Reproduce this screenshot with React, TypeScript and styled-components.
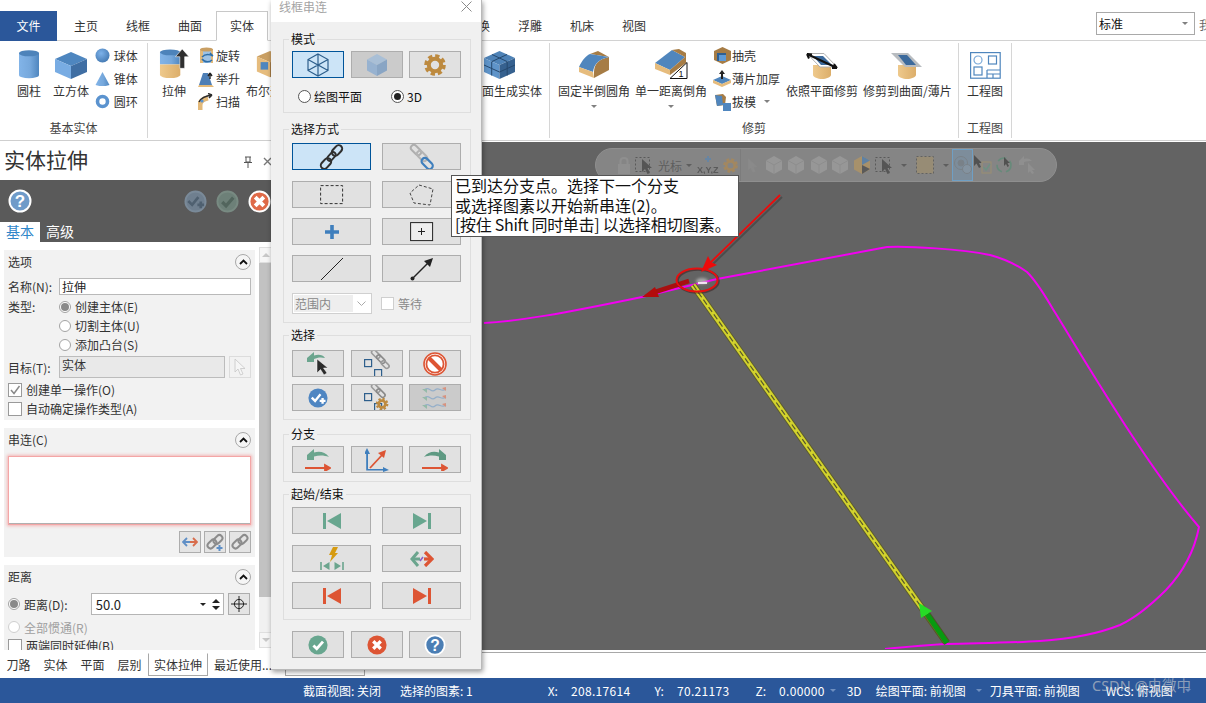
import React from 'react';
import styled, { createGlobalStyle } from 'styled-components';

const Global = createGlobalStyle`
  html, body { margin: 0; padding: 0; width: 1206px; height: 703px; overflow: hidden; background: #fff; }
  body { font-family: "Noto Sans CJK SC", "Noto Sans", sans-serif; font-size: 12px; color: #2b2b2b; }
  * { box-sizing: border-box; }
`;

const Root = styled.div`position: relative; width: 1206px; height: 703px; overflow: hidden; display: flex; flex-direction: column; background: #fff;`;

/* ---------- tab strip ---------- */
const TabStrip = styled.div`height: 41px; flex: none; display: flex; align-items: flex-end; border-bottom: 1px solid #d2d2d2; white-space: nowrap;`;
const FileTab = styled.div`width: 57px; height: 30px; margin-right: 3px; margin-bottom: -1px; background: #2b579a; color: #fff; display: flex; align-items: center; justify-content: center; line-height: 14px;`;
const Tab = styled.div<{ $active?: boolean; $w?: number }>`
  width: ${p => p.$w ?? 52}px; height: ${p => (p.$active ? 30 : 29)}px; margin-bottom: ${p => (p.$active ? -1 : 0)}px;
  display: flex; align-items: center; justify-content: center; line-height: 14px; color: #333;
  background: #fff; border: 1px solid ${p => (p.$active ? '#c8c8c8' : 'transparent')}; border-bottom-color: ${p => (p.$active ? '#fff' : 'transparent')};
`;
const StyleCombo = styled.div`margin-left: auto; margin-bottom: 5px; width: 99px; height: 23px; border: 1px solid #a9a9a9; display: flex; align-items: center; justify-content: space-between; padding: 0 6px 0 2px; color: #111;`;
const ClippedHint = styled.span`margin: 0 -5px 7px 4px; color: #666;`;
const Caret = styled.i<{ $c?: string; $ml?: number }>`
  display: inline-block; flex: none; width: 0; height: 0; margin-left: ${p => p.$ml ?? 0}px;
  border-left: 3px solid transparent; border-right: 3px solid transparent; border-top: 3px solid ${p => p.$c ?? '#808080'};
`;

/* ---------- ribbon ---------- */
const Ribbon = styled.div`height: 100px; flex: none; display: flex; padding-top: 2px; border-bottom: 1px solid #cfcfcf;`;
const RGroup = styled.div<{ $w: number }>`width: ${p => p.$w}px; height: 95px; flex: none; display: flex; flex-direction: column; border-right: 1px solid #d6d6d6;`;
const RGroupBody = styled.div<{ $pl: number; $gap?: number }>`height: 76px; display: flex; align-items: flex-start; padding-left: ${p => p.$pl}px; gap: ${p => p.$gap ?? 5}px; white-space: nowrap;`;
const RGroupLabel = styled.div`height: 19px; line-height: 17px; text-align: center; color: #444;`;
const Big = styled.div<{ $ml?: number; $auto?: boolean }>`
  display: flex; flex-direction: column; align-items: center; flex: none;
  margin-left: ${p => (p.$auto ? 'auto' : `${p.$ml ?? 0}px`)}; ${p => p.$auto && 'margin-right: 7px;'}
`;
const BigIcon = styled.div`height: 41px; display: flex; align-items: flex-end; justify-content: center; padding-bottom: 5px;`;
const BigText = styled.div`height: 14px; line-height: 14px; color: #333;`;
const BigCaret = styled.div`height: 16px; display: flex; align-items: center; justify-content: center;`;
const SmallCol = styled.div<{ $ml?: number }>`display: flex; flex-direction: column; padding-top: 1px; margin-left: ${p => p.$ml ?? 0}px; flex: none;`;
const SmallItem = styled.div`height: 23px; display: flex; align-items: center; gap: 1px; color: #333; line-height: 14px;`;
const SmallIconBox = styled.span<{ $w: number }>`width: ${p => p.$w}px; display: flex; justify-content: center; flex: none;`;

/* ---------- main ---------- */
const Main = styled.div`height: 512px; flex: none; display: flex;`;
const Left = styled.div`width: 271px; flex: none; display: flex; flex-direction: column; overflow: hidden; background: #fff;`;
const PanelHead = styled.div`height: 39px; flex: none; display: flex; align-items: center; padding: 0 0 4px 4px; font-size: 21px; color: #333; white-space: nowrap;`;
const PanelHeadTools = styled.div`margin-left: auto; display: flex; align-items: center; gap: 10px; margin-right: -1px; padding-top: 6px;`;
const DarkBar = styled.div`height: 42px; flex: none; background: #5a5a5a; display: flex; align-items: center; padding-left: 8px;`;
const DarkBarRight = styled.div`margin-left: auto; display: flex; gap: 9px;`;
const PanelTabs = styled.div`height: 20px; flex: none; background: #5a5a5a; display: flex; align-items: stretch; font-size: 14px; line-height: 18px;`;
const PanelTab = styled.div<{ $on?: boolean }>`
  ${p => p.$on && 'width: 40px;'} text-align: center;
  background: ${p => (p.$on ? '#fff' : 'transparent')}; color: ${p => (p.$on ? '#2f86c9' : '#fff')}; margin-left: ${p => (p.$on ? 0 : 6)}px;
`;
const PanelBody = styled.div`height: 408px; flex: none; display: flex; align-items: flex-start; padding: 8px 0 0 4px; overflow: hidden;`;
const Cards = styled.div`width: 251px; flex: none; display: flex; flex-direction: column; gap: 8px;`;
const Card = styled.section<{ $h: number }>`height: ${p => p.$h}px; flex: none; background: #f2f2f2; padding: 0 4px; white-space: nowrap;`;
const CardHead = styled.div`height: 24px; display: flex; align-items: center; justify-content: space-between; color: #333; line-height: 14px; padding-bottom: 1px;`;
const Collapse = styled.span`width: 16px; height: 16px; border-radius: 50%; border: 1px solid #a8a8a8; background: #f5f5f5; display: flex; align-items: center; justify-content: center;`;
const FormRow = styled.div<{ $h: number; $mt?: number }>`height: ${p => p.$h}px; margin-top: ${p => p.$mt ?? 0}px; display: flex; align-items: center; color: #333;`;
const FieldLabel = styled.span<{ $top?: boolean }>`width: 51px; flex: none; ${p => p.$top && 'align-self: flex-start; line-height: 19px;'}`;
const TextInput = styled.div`width: 192px; height: 17px; background: #fff; border: 1px solid #b9b9b9; padding-left: 2px; line-height: 15px; color: #222;`;
const Dot = styled.span<{ $on?: boolean; $dis?: boolean; $size?: number; $dark?: boolean; $ml?: number }>`
  width: ${p => p.$size ?? 12}px; height: ${p => p.$size ?? 12}px; border-radius: 50%; background: #fff; flex: none; margin-left: ${p => p.$ml ?? 0}px;
  border: 1px solid ${p => (p.$dark ? '#555' : p.$dis ? '#cfcfcf' : '#a3a3a3')}; display: flex; align-items: center; justify-content: center;
  &::after { content: ''; display: ${p => (p.$on ? 'block' : 'none')}; width: ${p => (p.$dark ? 7 : 8)}px; height: ${p => (p.$dark ? 7 : 8)}px; border-radius: 50%; background: ${p => (p.$dark ? '#222' : '#8a8a8a')}; }
`;
const RadioStack = styled.div`display: flex; flex-direction: column;`;
const RadioRow = styled.label`height: 19px; display: flex; align-items: center; gap: 4px; color: #333;`;
const DimText = styled.span`color: #a0a0a0; margin-left: 4px;`;
const DotLabel = styled.span`margin-left: 4px;`;
const TargetBox = styled.div`width: 166px; height: 22px; background: #e9e9e9; border: 1px solid #bcbcbc; padding: 0 2px; line-height: 15px; color: #333;`;
const SquareBtn = styled.div<{ $faint?: boolean; $ml?: number }>`
  width: 22px; height: 22px; flex: none; margin-left: ${p => p.$ml ?? 0}px; background: ${p => (p.$faint ? '#f2f2f2' : '#e4e4e4')}; border: 1px solid ${p => (p.$faint ? '#dcdcdc' : '#adadad')};
  display: flex; align-items: center; justify-content: center;
`;
const CheckRow = styled.label<{ $mt?: number }>`height: 19px; margin-top: ${p => p.$mt ?? 0}px; display: flex; align-items: center; gap: 4px; color: #333;`;
const CheckBox = styled.span`width: 14px; height: 14px; flex: none; background: #fff; border: 1px solid #9a9a9a; display: flex; align-items: center; justify-content: center;`;
const ChainList = styled.div`height: 67px; margin: 5px 1px 0; background: #fff; border-bottom: 1px solid #b0b0b0; box-shadow: 0 0 0 1px #f4a6a6, 0 0 3px 2px #f3b5b5;`;
const BtnRow = styled.div`margin-top: 7px; display: flex; justify-content: flex-end; gap: 3px;`;
const Spin = styled.div`width: 133px; height: 22px; margin-left: 23px; margin-right: 4px; flex: none; background: #fff; border: 1px solid #b5b5b5; display: flex; align-items: center; padding: 0 3px 0 4px; font-size: 13px; color: #222;`;
const SpinTools = styled.div`margin-left: auto; display: flex; align-items: center; gap: 6px;`;
const Updown = styled.div`display: flex; flex-direction: column; gap: 3px;`;
const TriUp = styled.i`display: block; width: 0; height: 0; border-left: 4px solid transparent; border-right: 4px solid transparent; border-bottom: 4px solid #222;`;
const TriDown = styled.i`display: block; width: 0; height: 0; border-left: 4px solid transparent; border-right: 4px solid transparent; border-top: 4px solid #222;`;
const Scrollbar = styled.div`width: 13px; height: 401px; margin: -3px 0 0 4px; flex: none; display: flex; flex-direction: column; background: #f1f1f1;`;
const ScrollBtn = styled.div`height: 16px; flex: none; border: 1px solid #dfdfdf; background: #f6f6f6; display: flex; align-items: center; justify-content: center;`;
const ScrollThumb = styled.div`height: 334px; flex: none; background: #c2c2c2;`;
const ScrollGap = styled.div`flex: 1;`;
const TriGrayUp = styled.i`display: block; width: 0; height: 0; border-left: 4px solid transparent; border-right: 4px solid transparent; border-bottom: 4px solid #c8c8c8;`;
const TriGrayDown = styled.i`display: block; width: 0; height: 0; border-left: 4px solid transparent; border-right: 4px solid transparent; border-top: 4px solid #c8c8c8;`;

const ViewWrap = styled.div`flex: 1; display: flex; flex-direction: column; padding-top: 1px; border-bottom: 1px solid #a8a8a8; padding-bottom: 2px;`;
const Canvas = styled.div`flex: 1; position: relative; background: #636363; overflow: hidden;`;
const Drawing = styled.svg`position: absolute; left: 0; top: 0;`;
const Pill = styled.div`
  position: absolute; left: 324px; top: 6px; width: 462px; height: 34px; border-radius: 17px;
  background: #858585; border: 1px solid #8f8f8f; display: flex; align-items: center; padding-left: 20px; color: #5e5e5e;
  svg { opacity: .52; }
`;
const PillSlot = styled.span<{ $w: number; $hi?: boolean }>`
  width: ${p => p.$w}px; flex: none; align-self: stretch; display: flex; align-items: center; justify-content: center;
  ${p => p.$hi && 'background: #7d8d9b; outline: 1px solid #6f9fc4; outline-offset: -1px;'}
`;
const PillSep = styled.span`width: 1px; align-self: stretch; background: #7c7c7c; flex: none;`;

/* ---------- bottom ---------- */
const BottomTabs = styled.div`height: 25px; flex: none; display: flex; align-items: flex-start; white-space: nowrap;`;
const BTab = styled.div<{ $w: number; $on?: boolean; $ml?: number }>`
  width: ${p => p.$w}px; height: 23px; flex: none; margin-left: ${p => p.$ml ?? 0}px; display: flex; align-items: center; justify-content: center; color: #333;
  border: 1px solid ${p => (p.$on ? '#a8a8a8' : 'transparent')}; border-top-color: transparent;
`;
const Status = styled.div`height: 25px; flex: none; background: #2b579a; color: #fff; display: flex; align-items: center; white-space: nowrap; line-height: 14px;`;
const SItem = styled.span<{ $ml: number; $num?: boolean }>`margin-left: ${p => p.$ml}px; flex: none; display: inline-flex; align-items: center; ${p => p.$num && 'letter-spacing: .33px;'}`;
const Watermark = styled.div`position: absolute; left: 1092px; top: 676px; font-size: 14.5px; line-height: 18px; color: rgba(205,205,205,.62); white-space: nowrap; font-family: "Noto Sans", "Noto Sans CJK SC", sans-serif;`;

/* ---------- dialog ---------- */
const Dialog = styled.div`
  position: absolute; left: 271px; top: 0; width: 211px; height: 670px; background: #f0f0f0; border-right: 1px solid #b9b9b9; border-bottom: 1px solid #b9b9b9;
  box-shadow: 1px 2px 5px rgba(0,0,0,.4); display: flex; flex-direction: column;
`;
const DialogTitle = styled.div`height: 22px; flex: none; background: #fff; display: flex; align-items: flex-start; justify-content: space-between; padding: 0 9px 0 8px; color: #a4a4a4; line-height: 14px;`;
const Group = styled.fieldset<{ $mt: number; $h: number }>`
  margin: ${p => p.$mt}px 0 0 12px; width: 188px; height: ${p => p.$h}px; flex: none; min-width: 0;
  border: 1px solid #dedede; padding: 5px 9px 0 8px; display: flex; flex-direction: column;
`;
const GroupName = styled.legend`margin-left: -3px; padding: 0 2px; line-height: 14px; height: 14px; color: #111; font-size: 12px;`;
const BtnGrid = styled.div<{ $cols: number; $gap?: number; $mt?: number }>`
  display: grid; grid-template-columns: repeat(${p => p.$cols}, ${p => (p.$cols === 3 ? 52 : 79)}px);
  justify-content: space-between; row-gap: ${p => p.$gap ?? 10}px; margin-top: ${p => p.$mt ?? 0}px;
`;
const DBtn = styled.div<{ $state?: 'on' | 'off' }>`
  height: 27px; display: flex; align-items: center; justify-content: center; overflow: hidden;
  background: ${p => (p.$state === 'on' ? '#cce4f7' : p.$state === 'off' ? '#cbcbcb' : '#e1e1e1')};
  border: 1px solid ${p => (p.$state === 'on' ? '#005499' : '#adadad')};
`;
const ModeRow = styled.div`height: 18px; margin-top: 9px; padding-left: 6px; display: flex; align-items: center; color: #111; gap: 3px;`;
const Select = styled.div`width: 80px; height: 21px; background: #fff; border: 1px solid #d0d0d0; padding: 1px; display: flex; align-items: stretch; color: #888;`;
const SelectValue = styled.span`width: 59px; background: #eeeeee; padding-left: 1px; line-height: 17px;`;
const SelectArrow = styled.span`flex: 1; display: flex; align-items: center; justify-content: center;`;
const WaitRow = styled.div`display: flex; align-items: center; gap: 4px; margin-left: 9px; color: #8a8a8a;`;
const SelectRow = styled.div`display: flex; align-items: center; margin-top: 11px;`;
const WaitBox = styled.span`width: 13px; height: 13px; background: #fff; border: 1px solid #cfcfcf;`;
const Footer = styled.div`margin: 11px 0 0 21px; width: 169px;`;
const Tip = styled.div`
  position: absolute; left: 451px; top: 175px; width: 288px; height: 62px; background: #fff; border: 1px solid #555;
  padding: 0 0 0 3px; font-size: 16px; line-height: 19.5px; color: #111; white-space: pre;
`;
const TipLatin = styled.span`letter-spacing: -.3px;`;

/* ---------- drawings ---------- */
const Defs = () => (
  <svg width="0" height="0" style={{ position: 'absolute' }}>
    <defs>
      <linearGradient id="cyl" x1="0" x2="1" y1="0" y2="0"><stop offset="0" stopColor="#82b4e8" /><stop offset=".55" stopColor="#76a8dc" /><stop offset="1" stopColor="#4f86bf" /></linearGradient>
      <linearGradient id="tan" x1="0" x2="1" y1="0" y2="0"><stop offset="0" stopColor="#eec98c" /><stop offset="1" stopColor="#dcae6a" /></linearGradient>
      <radialGradient id="sph" cx=".4" cy=".35" r=".75"><stop offset="0" stopColor="#7db2ea" /><stop offset="1" stopColor="#3f74ad" /></radialGradient>
    </defs>
  </svg>
);
const Cylinder = () => (
  <svg width="24" height="30" viewBox="0 0 24 32" preserveAspectRatio="none"><rect x="2" y="4" width="20" height="24" fill="url(#cyl)" /><ellipse cx="12" cy="28" rx="10" ry="3.2" fill="url(#cyl)" /><ellipse cx="12" cy="4.5" rx="10" ry="3.3" fill="#4d83ba" /></svg>
);
const Cube = () => (
  <svg width="32" height="27" viewBox="0 0 32 27"><path d="M16 0 32 7 16 14 0 7Z" fill="#4e86bf" /><path d="M0 7 16 14V27L0 20Z" fill="#78ace3" /><path d="M32 7 16 14V27L32 20Z" fill="#3f6ea3" /></svg>
);
const Sphere = () => <svg width="15" height="15" viewBox="0 0 15 15"><circle cx="7.5" cy="7.5" r="7" fill="url(#sph)" /></svg>;
const Cone = () => <svg width="15" height="15" viewBox="0 0 15 15"><path d="M7.5 1 14.5 14Q7.5 16.5 .5 14Z" fill="url(#cyl)" /></svg>;
const Torus = () => <svg width="15" height="15" viewBox="0 0 15 15"><circle cx="7.5" cy="7.5" r="5" fill="none" stroke="#5b93cf" strokeWidth="3.6" /></svg>;
const Extrude = () => (
  <svg width="30" height="31" viewBox="0 0 31 32">
    <rect x="1" y="4" width="21" height="13" fill="url(#cyl)" /><rect x="1" y="17" width="21" height="11" fill="url(#tan)" /><ellipse cx="11.5" cy="28" rx="10.5" ry="3" fill="url(#tan)" /><ellipse cx="11.5" cy="4.5" rx="10.5" ry="3" fill="#4d83ba" />
    <path d="M24 1 31 9H26.5V21H21.5V9H17Z" fill="#2f2f2f" stroke="#fff" strokeWidth=".6" />
  </svg>
);
const Revolve = () => (
  <svg width="16" height="18" viewBox="0 0 16 18"><rect x="1" y="2" width="13" height="14" fill="#e3b979" /><rect x="4" y="2" width="8" height="14" fill="#9ec2e4" /><ellipse cx="7.5" cy="2.5" rx="6.5" ry="2" fill="#c99f63" /><path d="M3 10C6 7 10 7 14 9M14 9 11 6M3 12C6 16 11 15 13 13" fill="none" stroke="#2f6fa8" strokeWidth="1.6" /></svg>
);
const Loft = () => (
  <svg width="17" height="18" viewBox="0 0 17 18"><path d="M5 3H10L14 15H1Z" fill="#4e7fb6" /><path d="M1 15H14L16 17H0Z" fill="#e3b979" /><path d="M12 9V3M12 3 10 6M12 3 14 6" stroke="#222" strokeWidth="1.4" fill="none" /></svg>
);
const Sweep = () => (
  <svg width="17" height="18" viewBox="0 0 17 18"><path d="M2 17V12C2 8 5 6 10 5" fill="none" stroke="#e3b979" strokeWidth="5" /><path d="M1 9C3 5 7 3 14 2M14 2 10 .5M14 2 11 5" fill="none" stroke="#2c2c2c" strokeWidth="1.5" /><circle cx="4" cy="8" r="1.6" fill="#5b93cf" /></svg>
);
const BooleanIco = () => (
  <svg width="32" height="30" viewBox="0 0 32 32"><path d="M16 2 30 8 16 14 2 8Z" fill="#c99f63" /><path d="M2 8 16 14V30L2 24Z" fill="#e6bc7d" /><path d="M30 8 16 14V30L30 24Z" fill="#a67c45" /><rect x="6" y="14" width="8" height="8" fill="#4e86bf" /></svg>
);
const GridCube = () => (
  <svg width="31" height="28" viewBox="0 0 31 28">
    <path d="M15.5 0 31 7 15.5 14 0 7Z" fill="#4e82b6" /><path d="M0 7 15.5 14V28L0 21Z" fill="#5f94c9" /><path d="M31 7 15.5 14V28L31 21Z" fill="#36618f" />
    <path d="M8 3.5 23 10.5M23 3.5 8 10.5M7.7 10.5V24.5M23.2 10.5V24.5M0 14 15.5 21 31 14" stroke="#26496e" fill="none" strokeWidth="1" />
  </svg>
);
const Fillet = () => (
  <svg width="31" height="28" viewBox="0 0 31 28">
    <path d="M11 3 19 0 30 6Z" fill="#a67c45" /><path d="M30 6V19L15 27V21C15 13 20 8 30 6Z" fill="#a67c45" />
    <path d="M0 16C3 9 8 4 11 3L30 6C20 8 15 13 14 21Z" fill="#5086bd" /><path d="M0 16 14 21 15 27 0 21Z" fill="#e6bc7d" />
  </svg>
);
const Chamfer = () => (
  <svg width="33" height="30" viewBox="0 0 33 30">
    <path d="M0 14 17 1 30 8 15 21Z" fill="#5086bd" /><path d="M17 1 24 0 31 4 31 14 15 26 15 21 30 8Z" fill="#a67c45" /><path d="M0 14 15 21V26L0 20Z" fill="#e6bc7d" />
    <path d="M15 29.5H32V13.5Z" fill="#fff" stroke="#111" strokeWidth="1" /><text x="23.5" y="28" fontSize="9" fontFamily="Liberation Sans" fill="#111">1</text>
  </svg>
);
const Shell = () => (
  <svg width="17" height="17" viewBox="0 0 17 17"><path d="M8.5 0 17 4V13L8.5 17 0 13V4Z" fill="#a67c45" /><path d="M3 6 12 6V14L3 14Z" fill="#2f5f92" /><path d="M5 8H12V14H5Z" fill="#5d9ad8" /></svg>
);
const Thicken = () => (
  <svg width="18" height="17" viewBox="0 0 18 17"><path d="M9 6 18 10 9 14 0 10Z" fill="#5086bd" /><path d="M0 10 9 14 18 10V13L9 17 0 13Z" fill="#e6bc7d" /><path d="M9 0 12 4H10V9H8V4H6Z" fill="#222" /></svg>
);
const Draft = () => (
  <svg width="17" height="18" viewBox="0 0 17 18"><path d="M1 2 9 1 12 4 11 12 3 13Z" fill="#a67c45" /><path d="M1 2 8 3 9 12 3 13Z" fill="#5086bd" /><rect x="9" y="10" width="8" height="8" fill="#4f86bf" /></svg>
);
const TrimPlane = () => (
  <svg width="32" height="26" viewBox="0 0 32 26"><path d="M7 12V22C7 24 12 26 16 26S25 24 25 22V12Z" fill="url(#tan)" /><path d="M1 .5H18L31 14H14Z" fill="#fff" stroke="#b0b0b0" /><path d="M7 3H17L26 12H15Z" fill="#3c6a9c" /><path d="M1 1 31 15M1 1 6 1.5M1 1 3 5.5M31 15 26 15M31 15 28 11" fill="none" stroke="#111" strokeWidth="2" /></svg>
);
const TrimSurface = () => (
  <svg width="32" height="26" viewBox="0 0 32 26"><path d="M7 12V22C7 24 12 26 16 26S25 24 25 22V12Z" fill="url(#tan)" /><path d="M0 0H17L31 14H14Z" fill="#b8bcc0" /><path d="M7 2H16L25 12H15Z" fill="#3c6a9c" /></svg>
);
const Drawing2D = () => (
  <svg width="31" height="27" viewBox="0 0 31 27" fill="none" stroke="#4f86bd" strokeWidth="1.2">
    <rect x=".6" y=".6" width="29.6" height="25.6" /><circle cx="8" cy="8" r="4" stroke="#7aa9d8" /><rect x="18.5" y="4" width="8" height="8" /><rect x="4" y="15" width="8" height="8" /><path d="M17 18H30M17 22H30M17 18V26M23 22V26" />
  </svg>
);
const Pin = () => <svg width="10" height="12" viewBox="0 0 10 12"><path d="M2 1H8M3 1V6H7V1M1 6.5H9M5 7V12" stroke="#555" fill="none" /></svg>;
const MiniX = () => <svg width="9" height="9" viewBox="0 0 9 9"><path d="M1 1 8 8M8 1 1 8" stroke="#777" strokeWidth="1.4" /></svg>;
const Chevron = () => <svg width="9" height="6" viewBox="0 0 9 6"><path d="M1 5 4.5 1.5 8 5" fill="none" stroke="#111" strokeWidth="1.8" /></svg>;

type RoundKind = 'help' | 'check' | 'x' | 'checkplus';
const Round = ({ size, bg, ring, kind, mark = '#fff' }: { size: number; bg: string; ring?: string; kind: RoundKind; mark?: string }) => (
  <svg width={size} height={size} viewBox="0 0 24 24">
    <circle cx="12" cy="12" r={ring ? 10.5 : 11.5} fill={bg} stroke={ring ?? 'none'} strokeWidth={ring ? 2 : 0} />
    {kind === 'help' && <text x="12" y="18" textAnchor="middle" fontSize="17" fontWeight="700" fontFamily="Liberation Sans" fill={mark}>?</text>}
    {kind === 'check' && <path d="M6.5 12.5 10.5 16.5 18 8" fill="none" stroke={mark} strokeWidth="3.4" />}
    {kind === 'x' && <path d="M7.5 7.5 16.5 16.5M16.5 7.5 7.5 16.5" fill="none" stroke={mark} strokeWidth="4" />}
    {kind === 'checkplus' && <path d="M4.5 11.5 8.5 15.5 15 7.5M14 15.5H21M17.5 12V19" fill="none" stroke={mark} strokeWidth="2.8" />}
  </svg>
);
const Cursor = ({ c = '#222', s = '#fff', w = 12, h = 18 }: { c?: string; s?: string; w?: number; h?: number }) => (
  <svg width={w} height={h} viewBox="0 0 12 18"><path d="M1 1V14L4 11 6.5 17 9 16 6.5 10.5H11Z" fill={c} stroke={s} strokeWidth=".8" /></svg>
);
const BlackChain = () => (
  <svg width="25" height="26" viewBox="0 0 25 26" fill="none" stroke="#2f2f2f">
    <rect x="1" y="16" width="12" height="7" rx="3.5" strokeWidth="2" transform="rotate(-48 7 19.5)" />
    <rect x="7.5" y="10" width="10" height="5" rx="2.5" strokeWidth="1.8" transform="rotate(-48 12.5 12.5)" />
    <rect x="12" y="3" width="12" height="7" rx="3.5" strokeWidth="2" transform="rotate(-48 18 6.5)" />
  </svg>
);
const GrayBlueChain = () => (
  <svg width="26" height="26" viewBox="0 0 26 26" fill="none">
    <rect x="1" y="3" width="12" height="6" rx="3" stroke="#aeaeae" strokeWidth="2" transform="rotate(45 7 6)" /><rect x="7" y="9" width="12" height="6" rx="3" stroke="#b4b4b4" strokeWidth="2" transform="rotate(45 13 12)" /><rect x="12" y="16" width="13" height="6.5" rx="3.2" stroke="#3f7fbd" strokeWidth="2.2" transform="rotate(45 18 19)" />
  </svg>
);
const WireCube = () => (
  <svg width="22" height="24" viewBox="0 0 22 24" fill="none" stroke="#2e5f8c" strokeWidth="1.2"><path d="M11 1 21 6.5V17.5L11 23 1 17.5V6.5ZM1 6.5 11 12 21 6.5M11 1V23M1 17.5 11 12 21 17.5" /></svg>
);
const SolidCube = () => (
  <svg width="22" height="24" viewBox="0 0 22 24"><path d="M11 1 21 6.5 11 12 1 6.5Z" fill="#a9bfd6" /><path d="M1 6.5 11 12V23L1 17.5Z" fill="#97b2d0" /><path d="M21 6.5 11 12V23L21 17.5Z" fill="#89a5c4" /></svg>
);
const Gear = ({ size = 22, c = '#bd8a3f' }: { size?: number; c?: string }) => (
  <svg width={size} height={size} viewBox="0 0 22 22" fill="none"><circle cx="11" cy="11" r="6.2" stroke={c} strokeWidth="4" /><circle cx="11" cy="11" r="9" stroke={c} strokeWidth="3.6" strokeDasharray="4.2 2.85" /></svg>
);
const DashedRect = () => <svg width="24" height="20" viewBox="0 0 24 20"><rect x=".6" y=".6" width="22" height="18" fill="none" stroke="#333" strokeDasharray="3 2" /></svg>;
const DashedPoly = () => <svg width="26" height="22" viewBox="0 0 26 22"><path d="M10 1 24 5 21 21 5 19 1 9Z" fill="none" stroke="#444" strokeDasharray="3 2" /></svg>;
const Plus = () => <svg width="14" height="14" viewBox="0 0 14 14"><path d="M7 0V14M0 7H14" stroke="#3f7fbd" strokeWidth="3.6" /></svg>;
const BoxPlus = () => <svg width="24" height="20" viewBox="0 0 24 20"><rect x=".6" y=".6" width="22" height="18" fill="#eee" stroke="#222" /><path d="M11.5 6V13M8 9.5H15" stroke="#222" /></svg>;
const LineIco = () => <svg width="24" height="24" viewBox="0 0 24 24"><path d="M1 23 23 1" stroke="#222" /></svg>;
const ArrowIco = () => <svg width="24" height="24" viewBox="0 0 24 24"><circle cx="2.5" cy="21.5" r="2" fill="#222" /><path d="M2.5 21.5 19 5" stroke="#222" strokeWidth="1.4" /><path d="M23 1 20 10 14 4Z" fill="#222" /></svg>;
const BackCursor = () => (
  <svg width="22" height="24" viewBox="0 0 22 24"><path d="M0 6 7 0V3.5C12 2 16 3 18 6 14 5 10 5.5 7 7V10H0Z" fill="#6ba58e" /><path d="M11 7V21L14.5 17.5 18 23 21 21 17.5 16H22Z" fill="#2b2b2b" stroke="#fff" strokeWidth=".5" transform="translate(-1 0)" /></svg>
);
const SquaresChain = ({ gear }: { gear?: boolean }) => (
  <svg width="26" height="26" viewBox="0 0 26 26" fill="none">
    <rect x=".6" y="8.6" width="7" height="7" stroke="#2e5f8c" strokeWidth="1.2" />
    <rect x="10.6" y="18.6" width="7" height="7" stroke="#2e5f8c" strokeWidth="1.2" />
    <rect x="7" y="1" width="10" height="4.5" rx="2.2" stroke="#9a9a9a" strokeWidth="1.6" transform="rotate(45 12 3)" />
    <rect x="12" y="6" width="10" height="4.5" rx="2.2" stroke="#8a8a8a" strokeWidth="1.6" transform="rotate(45 17 8)" />
    {!gear && <rect x="17" y="11" width="9" height="4.5" rx="2.2" stroke="#9a9a9a" strokeWidth="1.6" transform="rotate(45 21 13)" />}
    {gear && <g transform="translate(12 13) scale(.55)"><circle cx="11" cy="11" r="6.2" stroke="#bd8a3f" strokeWidth="5" /><circle cx="11" cy="11" r="9.5" stroke="#bd8a3f" strokeWidth="4" strokeDasharray="4 3.4" /></g>}
  </svg>
);
const NoSign = () => (
  <svg width="24" height="24" viewBox="0 0 24 24"><circle cx="12" cy="12" r="11" fill="#fff" stroke="#dd5534" strokeWidth="1.6" /><circle cx="12" cy="12" r="8.6" fill="none" stroke="#dd5534" strokeWidth="1.8" /><path d="M6 6 18 18" stroke="#dd5534" strokeWidth="4" /></svg>
);
const Waves = () => (
  <svg width="26" height="24" viewBox="0 0 26 24" fill="none" opacity=".7">
    {[4, 12, 20].map(y => (
      <g key={y}><path d={`M2 ${y}C7 ${y - 5} 9 ${y + 4} 13 ${y} 17 ${y - 4} 19 ${y + 3} 24 ${y - 1}`} stroke="#7da3c8" strokeWidth="1.2" /><path d={`M0 ${y - 1}H5V${y + 3}Z`} fill="#7fb39c" /><path d={`M24 ${y - 3}V${y + 1}L20 ${y - 2}Z`} fill="#dd7a5e" /></g>
    ))}
  </svg>
);
const RedLine = ({ y }: { y: number }) => <path d={`M0 ${y}H20M20 ${y - 3}V${y + 3}L25 ${y}Z`} stroke="#dd5534" strokeWidth="1.8" fill="#dd5534" />;
const BackBranch = () => <svg width="26" height="22" viewBox="0 0 26 22"><path d="M2 6 9 0V3.5C15 2 20 3 24 8 19 6 14 6 9 7.5V11H2Z" fill="#6ba58e" /><RedLine y={19} /></svg>;
const FwdBranch = () => <svg width="26" height="22" viewBox="0 0 26 22"><path d="M24 6 17 0V3.5C11 2 6 3 2 8 7 6 12 6 17 7.5V11H24Z" fill="#5f9a83" /><RedLine y={19} /></svg>;
const Axes = () => (
  <svg width="24" height="24" viewBox="0 0 24 24"><path d="M2 0 5 6H3V21H18V19L24 22 18 24V22.5H1.2V6H-1Z" fill="#3f7fbd" /><path d="M5 20 18 6" stroke="#dd5534" strokeWidth="1.8" /><path d="M21 2 19 10 13 5Z" fill="#dd5534" /></svg>
);
const SkipStart = ({ c }: { c: string }) => <svg width="18" height="16" viewBox="0 0 18 16"><rect x="0" width="3" height="16" fill={c} /><path d="M18 0V16L4 8Z" fill={c} /></svg>;
const SkipEnd = ({ c }: { c: string }) => <svg width="18" height="16" viewBox="0 0 18 16"><rect x="15" width="3" height="16" fill={c} /><path d="M0 0V16L14 8Z" fill={c} /></svg>;
const Bolt = () => (
  <svg width="24" height="24" viewBox="0 0 24 24"><path d="M13 0H18L15 6H18L10 15 12 8H9Z" fill="#d69b10" /><path d="M1 15V23M23 15V23" stroke="#6ba58e" strokeWidth="1.6" /><path d="M9.5 15V23L3 19Z M14.5 15V23L21 19Z" fill="#6ba58e" /></svg>
);
const Swap = () => (
  <svg width="24" height="16" viewBox="0 0 24 16"><path d="M8 1 2 8 8 15" fill="none" stroke="#6ba58e" strokeWidth="3" /><path d="M2 8H10" stroke="#6ba58e" strokeWidth="3" /><path d="M15 1 22 8 15 15" fill="none" stroke="#dd5534" strokeWidth="3.2" /><path d="M14 8H22" stroke="#dd5534" strokeWidth="3.2" /><path d="M10 10 13 6" stroke="#8a5cc7" strokeWidth="1.5" /></svg>
);
const SwapSmall = () => <svg width="16" height="10" viewBox="0 0 16 10"><path d="M8 5H2M5 1 1 5 5 9" fill="none" stroke="#5f8fc6" strokeWidth="1.8" /><path d="M8 5H14M11 1 15 5 11 9" fill="none" stroke="#d86d4c" strokeWidth="1.8" /></svg>;
const ChainGray = ({ plus }: { plus?: boolean }) => (
  <svg width="18" height="18" viewBox="0 0 18 18" fill="none">
    <rect x="1" y="8" width="10" height="6" rx="3" stroke="#8c8c8c" strokeWidth="2" transform="rotate(-45 6 11)" /><rect x="7" y="3.5" width="10" height="6" rx="3" stroke="#8c8c8c" strokeWidth="2" transform="rotate(-45 12 6.5)" />
    {plus && <path d="M13.5 12V18M10.5 15H16.5" stroke="#5f8fc6" strokeWidth="2" />}
  </svg>
);
const Target = () => <svg width="16" height="16" viewBox="0 0 16 16" fill="none" stroke="#222"><circle cx="8" cy="8" r="4.6" /><path d="M8 0V16M0 8H16" /></svg>;

const PillLock = () => <svg width="14" height="18" viewBox="0 0 14 18"><rect x="1" y="8" width="12" height="10" fill="#999" /><path d="M3.5 8V5C3.5 1 10.5 1 10.5 5V8" fill="none" stroke="#999" strokeWidth="2" /></svg>;
const PillCursorBox = () => <svg width="20" height="20" viewBox="0 0 20 20"><rect x=".5" y="2.5" width="14" height="14" fill="none" stroke="#333" strokeDasharray="2 2" /><path d="M7 4V17L10 14 12.5 19 15 18 12.5 13H17Z" fill="#2b2b2b" /></svg>;
const PillXYZ = () => <svg width="22" height="18" viewBox="0 0 22 18"><path d="M11 0V6M8 3H14" stroke="#4f86bd" strokeWidth="2" /><text x="0" y="17" fontSize="9" fontWeight="700" fontFamily="Liberation Sans" fill="#333">X,Y,Z</text></svg>;
const PillCube = ({ c = '#a9a9a9' }: { c?: string }) => <svg width="16" height="18" viewBox="0 0 16 18"><path d="M8 0 16 4.5V13.5L8 18 0 13.5V4.5Z" fill={c} /><path d="M0 4.5 8 9 16 4.5M8 9V18" stroke="#888" fill="none" strokeWidth=".6" /></svg>;
const PillTan = () => <svg width="16" height="18" viewBox="0 0 16 18"><path d="M8 0 16 4.5V13.5L8 18 0 13.5V4.5Z" fill="#c79c55" /><path d="M8 0 16 4.5 8 9Z" fill="#3f7fbd" /><path d="M8 9 16 13 8 18Z" fill="#333" /></svg>;
const PillTanBox = () => <svg width="18" height="18" viewBox="0 0 18 18"><rect x=".5" y=".5" width="17" height="17" fill="#a89468" stroke="#444" strokeDasharray="2 2" /></svg>;
const PillClock = () => <svg width="20" height="20" viewBox="0 0 20 20" fill="none" stroke="#777"><circle cx="8" cy="8" r="6.5" /><circle cx="8" cy="8" r="3" fill="#777" /><circle cx="14" cy="14" r="4.5" fill="#8b99a5" /></svg>;
const PillCheckDoc = () => <svg width="20" height="20" viewBox="0 0 20 20"><path d="M1 0V11L3.5 8.5 6 13 8 12 6 8H9Z" fill="#222" /><rect x="9" y="7" width="9" height="11" fill="none" stroke="#a89468" strokeWidth="1.2" /><path d="M10.5 12 13 15 17 9" fill="none" stroke="#5a9c80" strokeWidth="1.4" /></svg>;
const PillRefresh = () => <svg width="20" height="20" viewBox="0 0 20 20" fill="none"><circle cx="9" cy="10" r="7" stroke="#4d8f70" strokeWidth="1.6" strokeDasharray="9 4" /><path d="M9 2V11L11 9 12.5 12 14 11 12.5 8H15Z" fill="#222" /></svg>;
const PillUndo = () => <svg width="18" height="18" viewBox="0 0 18 18"><path d="M0 5 5 0V3C9 2 11 3 13 5 10 5 7 5 5 6V9H0Z" fill="#9a9a9a" /><path d="M9 7V17L11 15 13 18 15 17 13 14H16Z" fill="#9a9a9a" /></svg>;

const CanvasArt = () => (
  <Drawing width="935" height="507" viewBox="271 142 935 507">
    <defs>
      <filter id="soft" x="-50%" y="-50%" width="200%" height="200%"><feGaussianBlur stdDeviation="1.6" /></filter>
    </defs>
    <path d="M484 323C520 321 560 314 642 297L717 279 887 247C910 246 960 249 990 255 1005 259 1017 265 1027 272 1040 285 1050 305 1056 314 1090 370 1150 470 1199 527 1195 548 1185 570 1166 590 1150 606 1135 618 1120 625 1095 635 1070 639 1040 641 1010 643 980 643 947 644 925 645 905 647 885 649" fill="none" stroke="#f200f2" strokeWidth="2" />
    <path d="M693 285 946 642" stroke="#5a5a22" strokeWidth="7" opacity=".8" />
    <path d="M693 285 946 642" stroke="#d2d22c" strokeWidth="5" />
    <path d="M693 285 946 642" stroke="#58582a" strokeWidth="1.2" strokeDasharray="6 3" />
    <ellipse cx="702" cy="281" rx="6" ry="3" fill="#c8c8c8" opacity=".7" filter="url(#soft)" />
    <path d="M698 283H707" stroke="#fff" strokeWidth="1.6" />
    <path d="M689 281 655 292" stroke="#a81010" strokeWidth="4.5" />
    <path d="M642 297 655 287 659 297Z" fill="#b30c0c" />
    <ellipse cx="697" cy="280" rx="20.5" ry="11.5" fill="none" stroke="#3a1a1a" strokeWidth="2.6" opacity=".5" transform="translate(1 1)" />
    <ellipse cx="697" cy="280" rx="20.5" ry="11.5" fill="none" stroke="#e61010" strokeWidth="2" />
    <path d="M781 196 712 263" stroke="#3a3a3a" strokeWidth="2" opacity=".55" transform="translate(1 1)" />
    <path d="M780 195 711 262" stroke="#ee0a0a" strokeWidth="1.8" />
    <path d="M701 272 708 256 711 262 717 265Z" fill="#ee0a0a" />
    <path d="M947 643 927 614" stroke="#4b4b20" strokeWidth="7" opacity=".7" />
    <path d="M947 643 927 614" stroke="#089a10" strokeWidth="5" />
    <path d="M919 603 932 611 921 618Z" fill="#26dc26" />
  </Drawing>
);

const big = (icon: React.ReactNode, label: string, opts: { caret?: boolean; ml?: number; auto?: boolean } = {}) => (
  <Big $ml={opts.ml} $auto={opts.auto}>
    <BigIcon>{icon}</BigIcon>
    <BigText>{label}</BigText>
    {opts.caret && <BigCaret><Caret /></BigCaret>}
  </Big>
);

export default function App() {
  return (
    <Root>
      <Global />
      <Defs />
      <TabStrip>
        <FileTab>文件</FileTab>
        <Tab>主页</Tab><Tab>线框</Tab><Tab>曲面</Tab><Tab $active>实体</Tab>
        <Tab $w={184} /><Tab>转换</Tab><Tab>浮雕</Tab><Tab>机床</Tab><Tab>视图</Tab>
        <StyleCombo>标准<Caret /></StyleCombo>
        <ClippedHint>我</ClippedHint>
      </TabStrip>

      <Ribbon>
        <RGroup $w={148}>
          <RGroupBody $pl={17} $gap={12}>
            {big(<Cylinder />, '圆柱')}
            {big(<Cube />, '立方体')}
            <SmallCol $ml={-7}>
              <SmallItem><SmallIconBox $w={16}><Sphere /></SmallIconBox>&nbsp;球体</SmallItem>
              <SmallItem><SmallIconBox $w={16}><Cone /></SmallIconBox>&nbsp;锥体</SmallItem>
              <SmallItem><SmallIconBox $w={16}><Torus /></SmallIconBox>&nbsp;圆环</SmallItem>
            </SmallCol>
          </RGroupBody>
          <RGroupLabel>基本实体</RGroupLabel>
        </RGroup>
        <RGroup $w={402}>
          <RGroupBody $pl={11} $gap={9}>
            {big(<Extrude />, '拉伸')}
            <SmallCol>
              <SmallItem><SmallIconBox $w={17}><Revolve /></SmallIconBox>旋转</SmallItem>
              <SmallItem><SmallIconBox $w={17}><Loft /></SmallIconBox>举升</SmallItem>
              <SmallItem><SmallIconBox $w={17}><Sweep /></SmallIconBox>扫描</SmallItem>
            </SmallCol>
            {big(<BooleanIco />, '布尔运算', { ml: -3 })}
            {big(<GridCube />, '由曲面生成实体', { auto: true })}
          </RGroupBody>
          <RGroupLabel />
        </RGroup>
        <RGroup $w={409}>
          <RGroupBody $pl={8} $gap={5}>
            {big(<Fillet />, '固定半倒圆角', { caret: true })}
            {big(<Chamfer />, '单一距离倒角', { caret: true })}
            <SmallCol $ml={1}>
              <SmallItem><SmallIconBox $w={18}><Shell /></SmallIconBox>抽壳</SmallItem>
              <SmallItem><SmallIconBox $w={18}><Thicken /></SmallIconBox>薄片加厚</SmallItem>
              <SmallItem><SmallIconBox $w={18}><Draft /></SmallIconBox>拔模<Caret $ml={7} /></SmallItem>
            </SmallCol>
            {big(<TrimPlane />, '依照平面修剪', { ml: 1 })}
            {big(<TrimSurface />, '修剪到曲面/薄片')}
          </RGroupBody>
          <RGroupLabel>修剪</RGroupLabel>
        </RGroup>
        <RGroup $w={53}>
          <RGroupBody $pl={8}>{big(<Drawing2D />, '工程图')}</RGroupBody>
          <RGroupLabel>工程图</RGroupLabel>
        </RGroup>
      </Ribbon>

      <Main>
        <Left>
          <PanelHead>实体拉伸<PanelHeadTools><Pin /><MiniX /></PanelHeadTools></PanelHead>
          <DarkBar>
            <Round size={24} bg="#6f9bc9" ring="#fff" kind="help" />
            <DarkBarRight>
              <Round size={23} bg="#6f7f8f" ring="#7a8a99" kind="checkplus" mark="#4f6070" />
              <Round size={23} bg="#6d8078" ring="#788a82" kind="check" mark="#52655d" />
              <Round size={23} bg="#df6a48" ring="#fff" kind="x" />
            </DarkBarRight>
          </DarkBar>
          <PanelTabs><PanelTab $on>基本</PanelTab><PanelTab>高级</PanelTab></PanelTabs>
          <PanelBody>
            <Cards>
              <Card $h={170}>
                <CardHead>选项<Collapse><Chevron /></Collapse></CardHead>
                <FormRow $h={17} $mt={4}><FieldLabel>名称(N):</FieldLabel><TextInput>拉伸</TextInput></FormRow>
                <FormRow $h={57} $mt={2}>
                  <FieldLabel $top>类型:</FieldLabel>
                  <RadioStack>
                    <RadioRow><Dot $on />创建主体(E)</RadioRow>
                    <RadioRow><Dot />切割主体(U)</RadioRow>
                    <RadioRow><Dot />添加凸台(S)</RadioRow>
                  </RadioStack>
                </FormRow>
                <FormRow $h={22} $mt={2}>
                  <FieldLabel>目标(T):</FieldLabel><TargetBox>实体</TargetBox>
                  <SquareBtn $faint $ml={4}><Cursor c="#f6f6f6" s="#c6c6c6" /></SquareBtn>
                </FormRow>
                <CheckRow $mt={2}><CheckBox><svg width="12" height="12" viewBox="0 0 12 12"><path d="M2 6 5 9.5 10.5 2" fill="none" stroke="#8a8a8a" strokeWidth="1.5" /></svg></CheckBox>创建单一操作(O)</CheckRow>
                <CheckRow>
                  <CheckBox />自动确定操作类型(A)
                </CheckRow>
              </Card>
              <Card $h={129}>
                <CardHead>串连(C)<Collapse><Chevron /></Collapse></CardHead>
                <ChainList />
                <BtnRow>
                  <SquareBtn><SwapSmall /></SquareBtn>
                  <SquareBtn><ChainGray plus /></SquareBtn>
                  <SquareBtn><ChainGray /></SquareBtn>
                </BtnRow>
              </Card>
              <Card $h={90}>
                <CardHead>距离<Collapse><Chevron /></Collapse></CardHead>
                <FormRow $h={22} $mt={4}>
                  <Dot $on />
                  <DotLabel>距离(D):</DotLabel>
                  <Spin>50.0<SpinTools><Caret $c="#222" /><Updown><TriUp /><TriDown /></Updown></SpinTools></Spin>
                  <SquareBtn><Target /></SquareBtn>
                </FormRow>
                <FormRow $h={18} $mt={3}><Dot $dis /><DimText>全部惯通(R)</DimText></FormRow>
                <CheckRow><CheckBox />两端同时延伸(B)</CheckRow>
              </Card>
            </Cards>
            <Scrollbar>
              <ScrollBtn><TriGrayUp /></ScrollBtn>
              <ScrollThumb />
              <ScrollGap />
              <ScrollBtn><TriGrayDown /></ScrollBtn>
            </Scrollbar>
          </PanelBody>
        </Left>
        <ViewWrap>
          <Canvas>
            <CanvasArt />
            <Pill>
              <PillSlot $w={16}><PillLock /></PillSlot>
              <PillSlot $w={26}><PillCursorBox /></PillSlot>
              <PillSlot $w={24}>光标</PillSlot>
              <PillSlot $w={14}><Caret $c="#5e5e5e" /></PillSlot>
              <PillSlot $w={24}><PillXYZ /></PillSlot>
              <PillSlot $w={20}><Gear size={15} /></PillSlot>
              <PillSep />
              <PillSlot $w={22}><Cursor c="#8f8f8f" s="#8f8f8f" w={11} h={15} /></PillSlot>
              <PillSlot $w={21}><PillCube /></PillSlot>
              <PillSlot $w={24}><PillCube /></PillSlot>
              <PillSlot $w={21}><PillCube /></PillSlot>
              <PillSlot $w={22}><PillCube /></PillSlot>
              <PillSlot $w={22}><PillTan /></PillSlot>
              <PillSlot $w={24}><PillCursorBox /></PillSlot>
              <PillSlot $w={14}><Caret $c="#5e5e5e" /></PillSlot>
              <PillSlot $w={28}><PillTanBox /></PillSlot>
              <PillSlot $w={13}><Caret $c="#5e5e5e" /></PillSlot>
              <PillSlot $w={21} $hi><PillClock /></PillSlot>
              <PillSlot $w={20}><PillCheckDoc /></PillSlot>
              <PillSlot $w={24}><PillRefresh /></PillSlot>
              <PillSlot $w={22}><PillUndo /></PillSlot>
            </Pill>
          </Canvas>
        </ViewWrap>
      </Main>

      <BottomTabs>
        <BTab $w={37}>刀路</BTab><BTab $w={37}>实体</BTab><BTab $w={37}>平面</BTab><BTab $w={37}>层别</BTab>
        <BTab $w={60} $on>实体拉伸</BTab>
        <BTab $w={70}>最近使用...</BTab>
        <BTab $w={80} $on $ml={7}>&nbsp;</BTab>
      </BottomTabs>
      <Status>
        <SItem $ml={303}>截面视图: 关闭</SItem>
        <SItem $ml={19}>选择的图素: 1</SItem>
        <SItem $ml={75}>X:</SItem>
        <SItem $ml={13} $num>208.17614</SItem>
        <SItem $ml={24}>Y:</SItem>
        <SItem $ml={13} $num>70.21173</SItem>
        <SItem $ml={26}>Z:</SItem>
        <SItem $ml={13} $num>0.00000</SItem>
        <SItem $ml={5}><Caret $c="#6f8fc0" /></SItem>
        <SItem $ml={11}>3D</SItem>
        <SItem $ml={14}>绘图平面: 前视图</SItem>
        <SItem $ml={10}><Caret $c="#6f8fc0" /></SItem>
        <SItem $ml={8}>刀具平面: 前视图</SItem>
        <SItem $ml={26}>WCS: 俯视图</SItem>
        <SItem $ml={12}><Caret $c="#6f8fc0" /></SItem>
      </Status>
      <Watermark>CSDN @虫微中</Watermark>

      <Dialog>
        <DialogTitle>线框串连<svg width="11" height="11" viewBox="0 0 11 11" style={{ marginTop: 1 }}><path d="M.5.5 10.5 10.5M10.5.5.5 10.5" stroke="#8a8a8a" /></svg></DialogTitle>
        <Group $mt={10} $h={81}>
          <GroupName>模式</GroupName>
          <BtnGrid $cols={3}>
            <DBtn $state="on"><WireCube /></DBtn>
            <DBtn $state="off"><SolidCube /></DBtn>
            <DBtn><Gear /></DBtn>
          </BtnGrid>
          <ModeRow>
            <Dot $size={13} $dark />绘图平面
            <Dot $size={13} $dark $on $ml={26} />3D
          </ModeRow>
        </Group>
        <Group $mt={9} $h={201}>
          <GroupName>选择方式</GroupName>
          <BtnGrid $cols={2} $mt={2}>
            <DBtn $state="on"><BlackChain /></DBtn>
            <DBtn><GrayBlueChain /></DBtn>
          </BtnGrid>
          <BtnGrid $cols={2} $mt={11}>
            <DBtn><DashedRect /></DBtn>
            <DBtn><DashedPoly /></DBtn>
            <DBtn><Plus /></DBtn>
            <DBtn><BoxPlus /></DBtn>
            <DBtn><LineIco /></DBtn>
            <DBtn><ArrowIco /></DBtn>
          </BtnGrid>
          <SelectRow>
            <Select><SelectValue>范围内</SelectValue><SelectArrow><svg width="9" height="5" viewBox="0 0 9 5"><path d="M.5.5 4.5 4.5 8.5.5" fill="none" stroke="#aaa" /></svg></SelectArrow></Select>
            <WaitRow><WaitBox />等待</WaitRow>
          </SelectRow>
        </Group>
        <Group $mt={5} $h={92}>
          <GroupName>选择</GroupName>
          <BtnGrid $cols={3} $gap={7} $mt={3}>
            <DBtn><BackCursor /></DBtn>
            <DBtn><SquaresChain /></DBtn>
            <DBtn><NoSign /></DBtn>
            <DBtn><Round size={20} bg="#4f86c2" kind="checkplus" /></DBtn>
            <DBtn><SquaresChain gear /></DBtn>
            <DBtn $state="off"><Waves /></DBtn>
          </BtnGrid>
        </Group>
        <Group $mt={7} $h={55}>
          <GroupName>分支</GroupName>
          <BtnGrid $cols={3}>
            <DBtn><BackBranch /></DBtn>
            <DBtn><Axes /></DBtn>
            <DBtn><FwdBranch /></DBtn>
          </BtnGrid>
        </Group>
        <Group $mt={5} $h={133}>
          <GroupName>起始/结束</GroupName>
          <BtnGrid $cols={2} $mt={1}>
            <DBtn><SkipStart c="#68a68f" /></DBtn>
            <DBtn><SkipEnd c="#68a68f" /></DBtn>
          </BtnGrid>
          <BtnGrid $cols={2} $mt={11}>
            <DBtn><Bolt /></DBtn>
            <DBtn><Swap /></DBtn>
            <DBtn><SkipStart c="#dd5534" /></DBtn>
            <DBtn><SkipEnd c="#dd5534" /></DBtn>
          </BtnGrid>
        </Group>
        <Footer>
          <BtnGrid $cols={3}>
            <DBtn><Round size={20} bg="#68a68f" kind="check" /></DBtn>
            <DBtn><Round size={20} bg="#dd5534" kind="x" /></DBtn>
            <DBtn><Round size={22} bg="#4b7eb4" ring="#fff" kind="help" /></DBtn>
          </BtnGrid>
        </Footer>
      </Dialog>

      <Tip>{'已到达分支点。选择下一个分支\n或选择图素以开始新串连(2)。\n'}<TipLatin>[按住 Shift 同时单击] </TipLatin>{'以选择相切图素。'}</Tip>
    </Root>
  );
}
